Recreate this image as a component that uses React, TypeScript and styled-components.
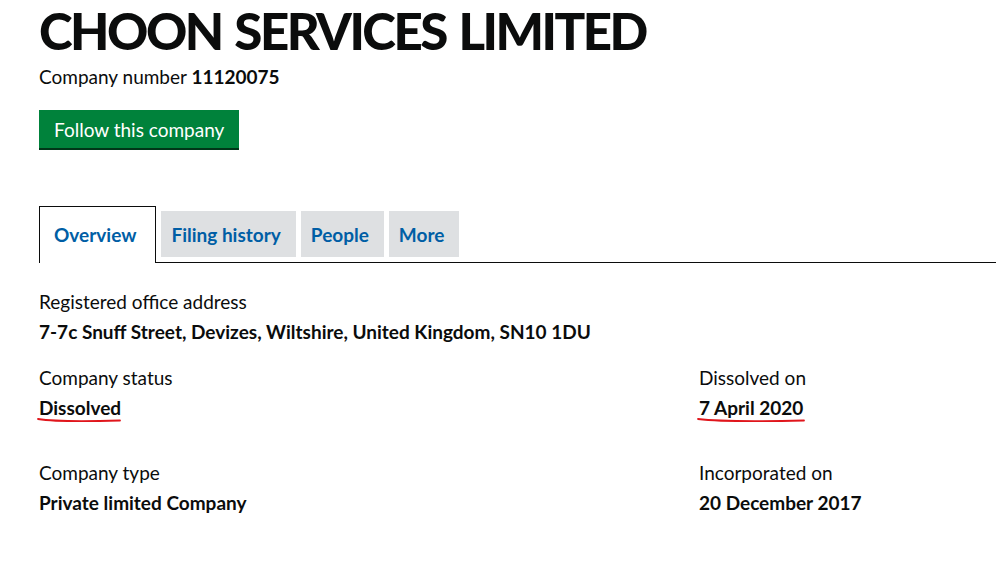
import React from "react";
import styled, { createGlobalStyle } from "styled-components";

const Global = createGlobalStyle`
  html, body { margin: 0; padding: 0; background: #fff; }
  body { font-family: Lato, "Open Sans", Arial, sans-serif; color: #0b0c0c; }
`;

const Page = styled.main`
  padding: 0 0 0 39px;
  width: 996px;
  box-sizing: border-box;
`;

const Title = styled.h1`
  margin: 0;
  padding-top: 3px;
  font-size: 51px;
  line-height: 56px;
  font-weight: 900;
  letter-spacing: -2.5px;
  word-spacing: 3px;
`;

const Number = styled.p`
  margin: 6px 0 0;
  font-size: 19px;
  line-height: 24px;
  b { font-weight: 700; }
`;

const FollowButton = styled.button`
  margin-top: 21px;
  display: inline-flex;
  align-items: center;
  height: 40px;
  padding: 0 15px 0 15px;
  background: #00823b;
  border: none;
  border-bottom: 2px solid #003618;
  color: #fff;
  font-family: inherit;
  font-size: 19px;
  box-sizing: border-box;
`;

const TabBar = styled.nav`
  margin-top: 56px;
  display: flex;
  align-items: flex-end;
  gap: 5px;
  border-bottom: 1px solid #0b0c0c;
`;

const Tab = styled.a<{ $active?: boolean }>`
  display: flex;
  align-items: center;
  box-sizing: border-box;
  font-size: 19px;
  font-weight: 700;
  color: #005ea5;
  text-decoration: none;
  ${(p) =>
    p.$active
      ? `
    height: 57px;
    padding: 0 19px 0 14px;
    background: #fff;
    border: 1px solid #0b0c0c;
    border-bottom: none;
    margin-bottom: -1px;
    padding-bottom: 1px;
  `
      : `
    height: 46px;
    margin-bottom: 5px;
    padding: 0 15px 0 10px;
    background: #dee0e2;
  `}
`;

const Grid = styled.section`
  display: grid;
  grid-template-columns: 660px 1fr;
  margin-top: 27px;
`;

const Field = styled.div<{ $span?: boolean; $gap?: number }>`
  grid-column: ${(p) => (p.$span ? "1 / span 2" : "auto")};
  margin-bottom: ${(p) => p.$gap ?? 0}px;
`;

const Label = styled.div`
  font-size: 19px;
  line-height: 24px;
  color: #0b0c0c;
`;

const Value = styled.div`
  margin-top: 6px;
  font-size: 19px;
  line-height: 24px;
  font-weight: 700;
  position: relative;
  display: inline-block;
`;

const Scribble = styled.svg`
  position: absolute;
  left: -2px;
  top: 21px;
  overflow: visible;
`;

const Underline = ({ width }: { width: number }) => (
  <Scribble width={width} height={6} viewBox={`0 0 ${width} 6`}>
    <path
      d={`M1 2 C ${width * 0.2} 4.5, ${width * 0.6} 4.5, ${width - 1} 3.5`}
      stroke="#e0161c"
      strokeWidth={1.8}
      fill="none"
      strokeLinecap="round"
    />
  </Scribble>
);

export default function App() {
  return (
    <>
      <Global />
      <Page>
        <Title>CHOON SERVICES LIMITED</Title>
        <Number>
          Company number <b>11120075</b>
        </Number>
        <FollowButton>Follow this company</FollowButton>
        <TabBar>
          <Tab $active>Overview</Tab>
          <Tab>Filing history</Tab>
          <Tab>People</Tab>
          <Tab>More</Tab>
        </TabBar>
        <Grid>
          <Field $span $gap={22}>
            <Label>Registered office address</Label>
            <Value>7-7c Snuff Street, Devizes, Wiltshire, United Kingdom, SN10 1DU</Value>
          </Field>
          <Field $gap={41}>
            <Label>Company status</Label>
            <Value>
              Dissolved
              <Underline width={84} />
            </Value>
          </Field>
          <Field $gap={41}>
            <Label>Dissolved on</Label>
            <Value>
              7 April 2020
              <Underline width={108} />
            </Value>
          </Field>
          <Field>
            <Label>Company type</Label>
            <Value>Private limited Company</Value>
          </Field>
          <Field>
            <Label>Incorporated on</Label>
            <Value>20 December 2017</Value>
          </Field>
        </Grid>
      </Page>
    </>
  );
}
